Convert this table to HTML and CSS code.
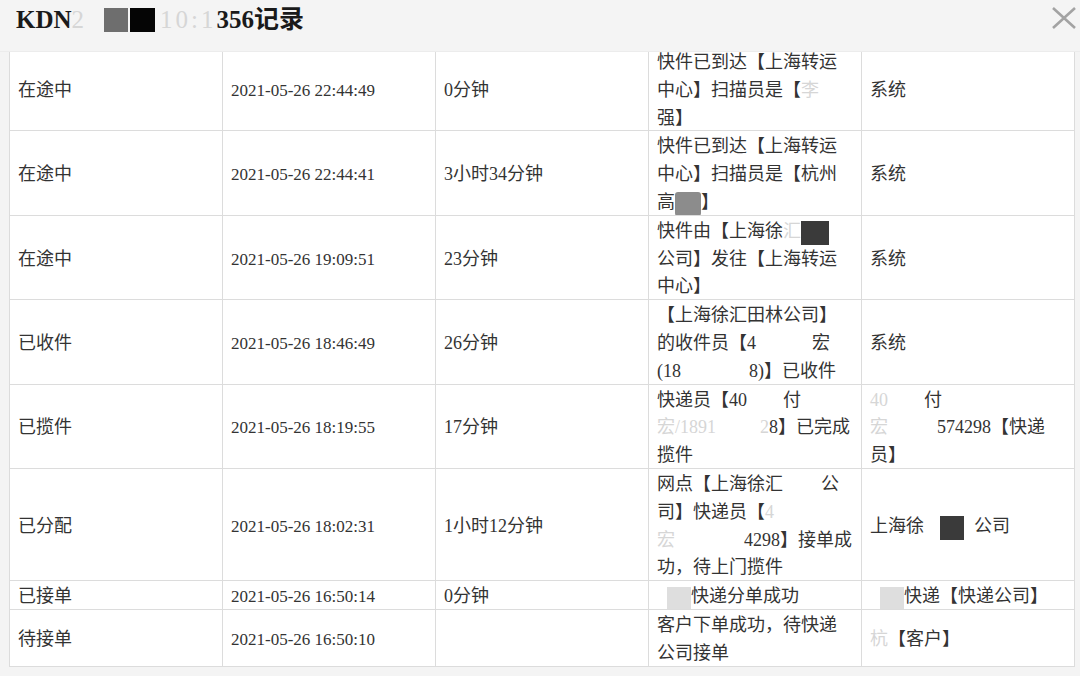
FILE: index.html
```html
<!DOCTYPE html>
<html lang="zh-CN">
<head>
<meta charset="utf-8">
<title>记录</title>
<link rel="stylesheet" href="styles.css">
</head>
<body>
<div class="dialog">
  <div class="head">
    <h1 class="title">KDN<span class="mask-lt">2</span><span class="mask-gap"></span><span class="blk blk-gray"></span><span class="blk blk-black"></span><span class="mask-lt spaced">10:1</span>356记录</h1>
    <button class="close" type="button" aria-label="关闭">
      <svg width="24" height="24" viewBox="0 0 24 24"><path d="M1 2 L23 22 M23 2 L1 22" stroke="#a3a3a3" stroke-width="2.6" fill="none"/></svg>
    </button>
  </div>
  <div class="body">
    <table class="log">
      <tbody>
        <tr>
          <td><div class="c">在途中</div></td>
          <td class="date"><div class="c">2021-05-26 22:44:49</div></td>
          <td><div class="c">0分钟</div></td>
          <td><div class="c">快件已到达【上海转运<br>中心】扫描员是【<span class="mask-lt">李</span><span class="wbox w36"></span><br>强】</div></td>
          <td><div class="c">系统</div></td>
        </tr>
        <tr>
          <td><div class="c">在途中</div></td>
          <td class="date"><div class="c">2021-05-26 22:44:41</div></td>
          <td><div class="c">3小时34分钟</div></td>
          <td><div class="c">快件已到达【上海转运<br>中心】扫描员是【杭州<br>高<span class="blk blk-mid"></span>】</div></td>
          <td><div class="c">系统</div></td>
        </tr>
        <tr>
          <td><div class="c">在途中</div></td>
          <td class="date"><div class="c">2021-05-26 19:09:51</div></td>
          <td><div class="c">23分钟</div></td>
          <td><div class="c">快件由【上海徐<span class="mask-lt">汇</span><span class="blk blk-dark"></span><br>公司】发往【上海转运<br>中心】</div></td>
          <td><div class="c">系统</div></td>
        </tr>
        <tr>
          <td><div class="c">已收件</div></td>
          <td class="date"><div class="c">2021-05-26 18:46:49</div></td>
          <td><div class="c">26分钟</div></td>
          <td><div class="c">【上海徐汇田林公司】<br>的收件员【4<span class="wbox w56"></span>宏<br>(18<span class="wbox w68"></span>8)】已收件</div></td>
          <td><div class="c">系统</div></td>
        </tr>
        <tr>
          <td><div class="c">已揽件</div></td>
          <td class="date"><div class="c">2021-05-26 18:19:55</div></td>
          <td><div class="c">17分钟</div></td>
          <td><div class="c">快递员【40<span class="wbox w36"></span>付<br><span class="mask-lt">宏/1891</span><span class="wbox w44"></span><span class="mask-lt">2</span>8】已完成<br>揽件</div></td>
          <td><div class="c"><span class="mask-lt">40</span><span class="wbox w36"></span>付<br><span class="mask-lt">宏</span><span class="wbox w49"></span>574298【快递<br>员】</div></td>
        </tr>
        <tr>
          <td><div class="c">已分配</div></td>
          <td class="date"><div class="c">2021-05-26 18:02:31</div></td>
          <td><div class="c">1小时12分钟</div></td>
          <td><div class="c">网点【上海徐汇<span class="wbox w38"></span>公<br>司】快递员【<span class="mask-lt">4</span><br><span class="mask-lt">宏</span><span class="wbox w69"></span>4298】接单成<br>功，待上门揽件</div></td>
          <td><div class="c">上海徐<span class="wbox w16"></span><span class="blk blk-dark2"></span>公司</div></td>
        </tr>
        <tr>
          <td><div class="c">已接单</div></td>
          <td class="date"><div class="c">2021-05-26 16:50:14</div></td>
          <td><div class="c">0分钟</div></td>
          <td><div class="c"><span class="blk blk-pale"></span>快递分单成功</div></td>
          <td><div class="c"><span class="blk blk-pale"></span>快递【快递公司】</div></td>
        </tr>
        <tr>
          <td><div class="c">待接单</div></td>
          <td class="date"><div class="c">2021-05-26 16:50:10</div></td>
          <td><div class="c"></div></td>
          <td><div class="c">客户下单成功，待快递<br>公司接单</div></td>
          <td><div class="c"><span class="mask-lt">杭</span>【客户】</div></td>
        </tr>
      </tbody>
    </table>
  </div>
</div>
</body>
</html>
```

FILE: styles.css
```css
* { box-sizing: border-box; }
html, body {
  margin: 0;
  padding: 0;
  width: 1080px;
  height: 676px;
  overflow: hidden;
  background: #f4f4f4;
}
.dialog {
  width: 1080px;
  height: 676px;
  display: flex;
  flex-direction: column;
  background: #f4f4f4;
  font-family: "Liberation Serif", "Noto Sans CJK SC", serif;
  color: #333;
}
.head {
  position: relative;
  z-index: 2;
  height: 52px;
  flex: 0 0 52px;
  display: flex;
  align-items: flex-start;
  justify-content: space-between;
  padding: 0 3px 0 16px;
  background: #f4f4f4;
  border-bottom: 1px solid #ececec;
}
.title {
  margin: 0;
  font-size: 25px;
  line-height: 40px;
  font-weight: bold;
  color: #1a1a1a;
  display: flex;
  align-items: center;
}
.mask-lt { color: #d6d6d6; font-weight: normal; }
.spaced { letter-spacing: 3px; }
.mask-gap { display: inline-block; width: 20px; }
.blk { display: inline-block; vertical-align: middle; }
.blk-gray { width: 24px; height: 24px; background: #6e6e6e; margin-right: 2px; }
.blk-black { width: 25px; height: 24px; background: #050505; margin-right: 5px; }
.close {
  margin-top: 5px;
  width: 26px;
  height: 26px;
  padding: 1px;
  border: 0;
  background: transparent;
  display: flex;
  align-items: center;
  justify-content: center;
}
.body {
  flex: 1 1 auto;
  overflow: hidden;
  padding: 0 5px 0 9px;
}
.log {
  margin-top: -6px;
  width: 1066px;
  table-layout: fixed;
  border-collapse: collapse;
  background: #fff;
  border: 1px solid #dcdcdc;
}
.log td {
  width: 213px;
  border: 1px solid #dcdcdc;
  padding: 0 8px;
  font-size: 18px;
  line-height: 27.8px;
  vertical-align: middle;
  color: #333;
  white-space: nowrap;
  overflow: hidden;
}
.log td .c { margin: 2px 0 -2px; }
.log td.date { font-size: 17px; }
.wbox { display: inline-block; height: 20px; vertical-align: middle; }
.w16 { width: 16px; }
.w36 { width: 36px; }
.w38 { width: 38px; }
.w44 { width: 44px; }
.w49 { width: 49px; }
.w56 { width: 56px; }
.w68 { width: 68px; }
.w69 { width: 69px; }
.blk-mid { width: 26px; height: 24px; background: #8c8c8c; border-radius: 3px; }
.blk-dark { width: 28px; height: 24px; background: #3a3a3a; }
.blk-dark2 { width: 24px; height: 24px; background: #3a3a3a; margin-right: 10px; }
.blk-pale { width: 24px; height: 22px; background: #dedede; margin-left: 10px; }
```
